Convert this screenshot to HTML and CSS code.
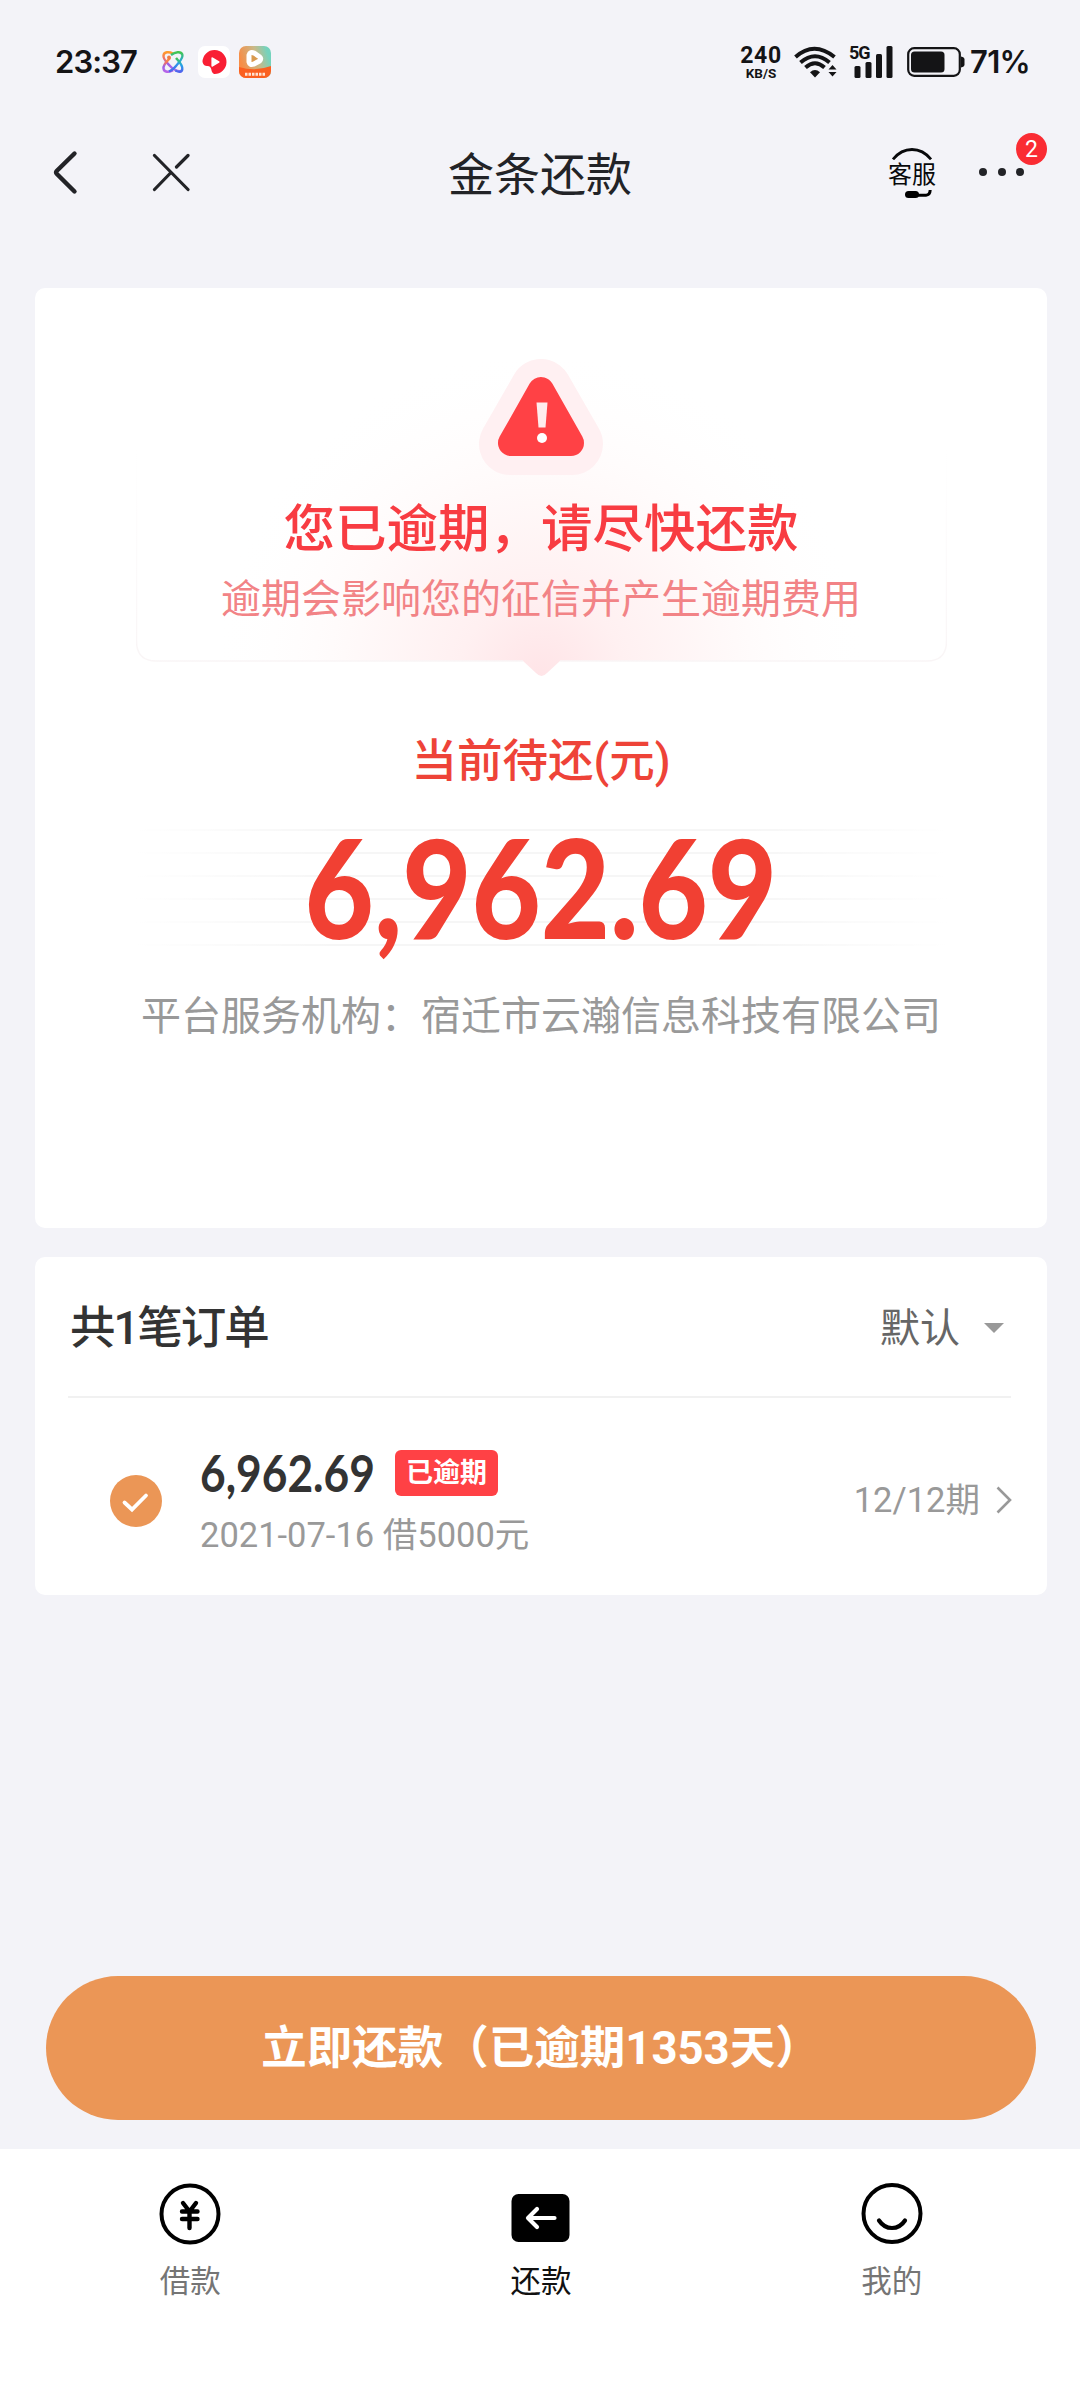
FILE: index.html
```html
<!DOCTYPE html>
<html lang="zh-CN">
<head>
<meta charset="utf-8">
<title>金条还款</title>
<link rel="stylesheet" href="styles.css">
</head>
<body>
<div class="screen">
  <header class="status">
    <span class="clock">23:37</span>
    <div class="apps">
      <svg width="24" height="24" viewBox="0 0 24 24">
        <defs><linearGradient id="rainbow" x1="0" y1="0" x2="0" y2="1"><stop offset="0" stop-color="#ff9a2a"/><stop offset=".35" stop-color="#f0706a"/><stop offset=".6" stop-color="#9b62e6"/><stop offset="1" stop-color="#b765ea"/></linearGradient>
        <linearGradient id="cool" x1="0" y1="0" x2="0" y2="1"><stop offset="0" stop-color="#43c64d"/><stop offset=".5" stop-color="#24a5e8"/><stop offset="1" stop-color="#4f63ee"/></linearGradient></defs>
        <g fill="none" stroke-width="2.400">
          <path d="M12 3.500C8 1.500 3 1.500 2.500 5.500S6 12.500 9 16s8 6 11 5" stroke="url(#rainbow)"/>
          <path d="M12 20.500c-4 2-9 2-9.500-2S6 11.500 9 8" stroke="url(#rainbow)"/>
          <path d="M10 5C14 2 20 .8 21.300 4.500S18 12 15 16s-5 4.500-7 5.500" stroke="url(#cool)"/>
          <path d="M15 8c3 3.500 6.800 7 6.300 11s-4 3-7 1.500" stroke="url(#cool)"/>
        </g>
        <circle cx="8" cy="7.500" r="1.900" fill="#f07a42"/>
      </svg>
      <svg width="32" height="32" viewBox="0 0 32 32">
        <rect width="32" height="32" rx="7" fill="#fff"/>
        <path d="M4.500 16A12 12 0 1 1 16 28c-2-1-2.300-2.500-2.600-4.200-.5-2.800-1.800-4-4.400-3.800-2 0-3.600-1-4.500-4z" fill="#f91f34"/>
        <path d="M13.400 12.300v7.400q0 1.500 1.400.8l6.300-3.700q1.200-.8 0-1.600l-6.300-3.700q-1.400-.7-1.400.8z" fill="#fff"/>
      </svg>
      <svg width="32" height="32" viewBox="0 0 32 32">
        <defs>
          <linearGradient id="video" x1="0" y1=".3" x2="1" y2="0"><stop offset="0" stop-color="#f78d46"/><stop offset=".5" stop-color="#c9b988"/><stop offset=".85" stop-color="#74d3bd"/></linearGradient>
          <clipPath id="tile"><rect width="32" height="32" rx="7"/></clipPath>
        </defs>
        <g clip-path="url(#tile)">
          <rect width="32" height="32" fill="url(#video)"/>
          <path d="M0 21q16 5 32-1v12H0z" fill="#fb6020"/>
        </g>
        <path d="M10 9v7q.8 3.500 4.500 2.200l6-3.200q2.500-2.200 0-4.200l-5-3.600q-4.500-2.200-5.500 1.800z" fill="#d99a4e" stroke="#fff" stroke-width="5" stroke-linejoin="round"/>
        <path d="M6 28.200h20" stroke="#ffe3d3" stroke-width="3" stroke-dasharray="2.500 1"/>
      </svg>
    </div>
    <div class="system">
      <div class="speed"><span class="speed-value">240</span><span class="speed-unit">KB/S</span></div>
      <svg class="wifi" width="44" height="32" viewBox="0 0 44 32">
        <g fill="none" stroke="#141416" stroke-width="4">
          <path d="M1.500 11Q20 -5.500 40.500 11"/>
          <path d="M6.500 16.500Q21 4 35.500 16.500"/>
          <path d="M11.500 21.500Q21 13 30.500 21.500"/>
        </g>
        <path d="M16 26.200q5-4.200 10 0l-5 5.300z" fill="#141416"/>
        <path d="M34.500 23.500l4-4.500 4 4.500zM34.500 26l4 4.500 4-4.500z" fill="#141416"/>
      </svg>
      <div class="cell">
        <svg width="46" height="32" viewBox="0 0 46 32">
          <g fill="#141416"><rect x="5.500" y="20" width="6" height="12" rx="1.500"/><rect x="16.500" y="16" width="6" height="16" rx="1.500"/><rect x="27" y="8" width="6" height="24" rx="1.500"/><rect x="37.500" y="0" width="6" height="32" rx="1.500"/></g>
        </svg>
        <span class="cell-type">5G</span>
      </div>
      <svg class="battery" width="58" height="32" viewBox="0 0 58 32">
        <rect x="1.200" y="2.200" width="51.600" height="27.600" rx="6" fill="none" stroke="#141416" stroke-width="2.200"/>
        <rect x="4" y="5.500" width="33.500" height="21" rx="3.500" fill="#141416"/>
        <path d="M54 10.500q3.500.6 3.500 3v5q0 2.400-3.500 3z" fill="#141416"/>
      </svg>
      <span class="percent">71%</span>
    </div>
  </header>

  <nav class="nav">
    <div class="nav-side">
      <svg width="30" height="48" viewBox="0 0 30 48"><path d="M22.500 5.500L4.700 23q-1.200 1.400 0 2.800L22.500 43.500" fill="none" stroke="#222327" stroke-width="4.400" stroke-linecap="round"/></svg>
      <svg width="40" height="40" viewBox="0 0 40 40"><path d="M4.500 3.500L38 37.500M38 3.500L26.500 15M20.500 21L4.500 37.500" fill="none" stroke="#222327" stroke-width="3.200" stroke-linecap="round"/></svg>
    </div>
    <h1 class="nav-title">金条还款</h1>
    <div class="nav-side nav-right">
      <div class="service">
        <svg class="service-arc" width="48" height="12" viewBox="0 0 48 12"><path d="M4 11.300Q12 1.500 23 1.500T42 11.300" fill="none" stroke="#08090b" stroke-width="2.800"/></svg>
        <span class="service-text">客服</span>
        <svg class="service-mic" width="48" height="9" viewBox="0 0 48 9"><path d="M41.200 0Q41 5 37 5.200H27" fill="none" stroke="#000" stroke-width="3"/><rect x="16" y="1" width="14" height="7" rx="3.500"/></svg>
      </div>
      <div class="more">
        <i></i><i></i><i></i>
        <span class="more-badge">2</span>
      </div>
    </div>
  </nav>

  <main class="content">
    <section class="card summary">
      <div class="notice">
        <svg class="notice-bg" width="811" height="322" viewBox="0 0 811 322">
          <defs>
            <radialGradient id="glow" gradientUnits="userSpaceOnUse" cx="0" cy="0" r="1" gradientTransform="translate(405 318) scale(330 330)">
              <stop offset="0" stop-color="#ffe4e7"/><stop offset=".25" stop-color="#fff0f1"/><stop offset=".6" stop-color="#fffafa"/><stop offset="1" stop-color="#fff" stop-opacity="0"/>
            </radialGradient>
            <linearGradient id="edge" gradientUnits="userSpaceOnUse" x1="0" y1="90" x2="0" y2="302"><stop offset="0" stop-color="#faf7f8" stop-opacity="0"/><stop offset="1" stop-color="#f9f5f6"/></linearGradient>
          </defs>
          <path d="M0 0H811V282Q811 302 791 302H424L411 314Q405.500 320 400 314L387 302H20Q0 302 0 282z" fill="url(#glow)"/>
          <path d="M.5 90V282Q.5 302 20 302H387M424 302H791Q810.500 302 810.500 282V90" fill="none" stroke="url(#edge)" stroke-width="1.500"/>
        </svg>
        <svg class="notice-icon" width="126" height="116" viewBox="0 0 126 116">
          <path d="M63 31L32 85H94z" fill="#fff0f2" stroke="#fff0f2" stroke-width="62" stroke-linejoin="round"/>
          <path d="M63 31L33 84H93z" fill="#ff4145" stroke="#ff4145" stroke-width="26" stroke-linejoin="round"/>
          <path d="M58.500 43.500H69.500L67.500 68.500H60.500z" fill="#fff" fill-opacity=".9"/><circle cx="64" cy="79" r="5" fill="#fff"/>
        </svg>
        <h2 class="notice-title">您已逾期，请尽快还款</h2>
        <p class="notice-text">逾期会影响您的征信并产生逾期费用</p>
      </div>
      <p class="due-label">当前待还(元)</p>
      <div class="due"><span class="due-amount">6,962.69</span></div>
      <p class="provider">平台服务机构：宿迁市云瀚信息科技有限公司</p>
    </section>

    <section class="card orders">
      <div class="orders-head">
        <h2 class="orders-title">共1笔订单</h2>
        <div class="sort"><span>默认</span><svg width="20" height="10" viewBox="0 0 20 10"><path d="M0 0H20L10 10z" fill="#999"/></svg></div>
      </div>
      <div class="order">
        <svg class="check" width="52" height="52" viewBox="0 0 52 52"><circle cx="26" cy="26" r="26" fill="#eb9656"/><path d="M14.500 27.500L22 34.500L36 20.500" fill="none" stroke="#fff" stroke-width="3.800" stroke-linecap="round"/></svg>
        <div class="order-main">
          <div class="order-top"><span class="order-amount">6,962.69</span><span class="tag">已逾期</span></div>
          <p class="order-date">2021-07-16 借5000元</p>
        </div>
        <span class="term">12/12期</span>
        <svg class="arrow" width="16" height="28" viewBox="0 0 16 28"><path d="M1.500 1.500L14 14L1.500 26.500" fill="none" stroke="#999" stroke-width="2.600"/></svg>
      </div>
    </section>
  </main>

  <button class="pay">立即还款（已逾期1353天）</button>

  <footer class="tabs">
    <div class="tab">
      <svg width="62" height="62" viewBox="0 0 62 62"><circle cx="31" cy="31" r="28.500" fill="none" stroke="#000" stroke-width="4"/><path d="M24 20L30.500 28.500L37 20M23 28.500H38.500M23 36H38.500M30.500 29V45" fill="none" stroke="#000" stroke-width="4.400" stroke-linecap="round"/></svg>
      <span>借款</span>
    </div>
    <div class="tab active">
      <svg width="62" height="62" viewBox="0 0 62 62"><rect x="1.500" y="11" width="58" height="48" rx="7"/><path d="M27 26L18 35L27 44M18.500 35H44.500" fill="none" stroke="#fff" stroke-width="4.200" stroke-linecap="round" stroke-linejoin="round"/></svg>
      <span>还款</span>
    </div>
    <div class="tab">
      <svg width="62" height="62" viewBox="0 0 62 62"><circle cx="31" cy="30.500" r="28.500" fill="none" stroke="#000" stroke-width="4"/><path d="M18 37.500Q23 45 31 45T44 37.500" fill="none" stroke="#000" stroke-width="4.200" stroke-linecap="round"/></svg>
      <span>我的</span>
    </div>
  </footer>
</div>
</body>
</html>
```
FILE: styles.css
```css
* { box-sizing: border-box; margin: 0; padding: 0; }
body { font-family: Roboto, "Noto Sans CJK SC", sans-serif; background: #f3f3f8; }
svg { display: block; flex: none; }
.screen { width: 1080px; height: 2400px; display: flex; flex-direction: column; overflow: hidden; background: #f3f3f8; color: #333; }

.status { height: 124px; padding: 0 50px 0 55px; display: flex; align-items: center; color: #141416; }
.clock { width: 106px; font: 600 31px/40px Inter, sans-serif; letter-spacing: -.9px; white-space: nowrap; }
.apps { display: flex; align-items: center; gap: 9px; }
.apps svg:first-child { margin-right: 4px; }
.system { margin-left: auto; display: flex; align-items: center; }
.speed { width: 44px; margin-right: 11px; display: flex; flex-direction: column; align-items: center; font-family: Roboto, sans-serif; font-weight: 700; }
.speed-value { font-size: 23px; line-height: 21px; letter-spacing: .6px; }
.speed-unit { font-size: 13.500px; line-height: 14px; }
.wifi { margin-right: 11px; }
.cell { position: relative; margin-right: 12px; }
.cell-type { position: absolute; left: 0; top: -2px; font: 700 18px/18px Roboto, sans-serif; letter-spacing: -1px; }
.battery { margin-right: 5px; }
.percent { width: 60px; font: 600 31px/40px Inter, sans-serif; letter-spacing: -.7px; white-space: nowrap; }

.nav { height: 96px; padding: 0 32px 0 52px; display: flex; align-items: center; justify-content: space-between; }
.nav-side { width: 300px; display: flex; align-items: center; gap: 68px; }
.nav-title { font-size: 46px; line-height: 60px; font-weight: 400; color: #222327; padding-top: 5px; margin-left: -20px; }
.nav-right { justify-content: flex-end; gap: 40px; }
.service { width: 48px; display: flex; flex-direction: column; align-items: center; padding-top: 2px; }
.service-text { font-size: 24px; line-height: 30px; color: #08090b; white-space: nowrap; position: relative; left: -1px; }
.more { position: relative; width: 71px; height: 48px; display: flex; align-items: center; gap: 10.500px; padding: 0 0 0 2px; }
.more i { width: 8px; height: 8px; border-radius: 50%; background: #222327; }
.more-badge { position: absolute; left: 39px; top: -15px; width: 31px; height: 32px; border-radius: 50%; background: #fa2c33; color: #fff; font-size: 23px; line-height: 34px; text-align: center; }

.content { padding: 68px 33px 0 35px; display: flex; flex-direction: column; gap: 29px; }
.card { background: #fff; border-radius: 10px; }
.summary { height: 940px; padding-top: 71px; display: flex; flex-direction: column; align-items: center; }
.notice { position: relative; width: 811px; height: 302px; display: flex; flex-direction: column; align-items: center; }
.notice-bg { position: absolute; left: 0; top: 0; }
.notice-icon, .notice-title, .notice-text { position: relative; }
.notice-title { margin-top: 25px; font-size: 51.500px; line-height: 60px; font-weight: 500; color: #f83c42; white-space: nowrap; }
.notice-text { margin-top: 15px; font-size: 40px; line-height: 50px; color: #f28386; white-space: nowrap; }
.due-label { margin-top: 71px; font-size: 45.500px; line-height: 60px; font-weight: 500; color: #ee4338; }
.due { width: 811px; height: 120px; margin-top: 36px; display: flex; justify-content: center; align-items: center; background: linear-gradient(90deg, #fff, transparent 25%, transparent 75%, #fff), repeating-linear-gradient(180deg, #fff 0, #fff 1px, #f6f6f6 1px, #f6f6f6 3px, #fff 3px, #fff 23px); }
.due-amount { font: 900 138px/120px Lato, sans-serif; color: #f14033; transform: translateY(-2px) scaleX(.866); white-space: nowrap; }
.provider { margin-top: 44px; font-size: 40px; line-height: 50px; color: #999; white-space: nowrap; }

.orders { height: 338px; padding: 0 36px 0 33px; }
.orders-head { height: 141px; border-bottom: 2px solid #f1f1f1; padding: 4px 0 0 2px; display: flex; align-items: center; justify-content: space-between; }
.orders-title { font-size: 45.500px; line-height: 60px; font-weight: 500; letter-spacing: -2px; }
.sort { display: flex; align-items: center; gap: 24px; padding-right: 7px; font-size: 40px; line-height: 50px; color: #666; }
.sort svg { margin-top: -2px; }
.order { height: 197px; padding: 6px 0 0 42px; display: flex; align-items: center; }
.check { margin-right: 38px; margin-top: 3px; }
.order-main { flex: 1; padding-top: 9px; }
.order-top { display: flex; align-items: center; height: 50px; }
.order-amount { width: 195px; font: 700 51px/50px Lato, sans-serif; transform: scaleX(.868); transform-origin: 0 50%; white-space: nowrap; }
.tag { width: 103px; height: 46px; border-radius: 6px; background: #ff4145; color: #fff; font-size: 27px; line-height: 46px; font-weight: 700; text-align: center; }
.order-date { font-size: 34.500px; line-height: 50px; margin-top: 12px; color: #999; white-space: nowrap; }
.term { font-size: 34.500px; line-height: 50px; color: #999; }
.arrow { margin-left: 16px; margin-right: -1px; }

.pay { width: 990px; height: 144px; margin: 381px 0 29px 46px; padding-top: 2px; border: 0; border-radius: 72px; background: #eb9656; color: #fff; font-family: inherit; font-size: 45.500px; line-height: 60px; font-weight: 700; white-space: nowrap; }

.tabs { flex: 1; background: #fff; padding: 34px 13px 0 15px; display: grid; grid-template-columns: repeat(3, 1fr); align-content: start; }
.tab { display: flex; flex-direction: column; align-items: center; gap: 17px; font-size: 30.500px; line-height: 40px; color: #757575; }
.tab.active { color: #111; }
```
